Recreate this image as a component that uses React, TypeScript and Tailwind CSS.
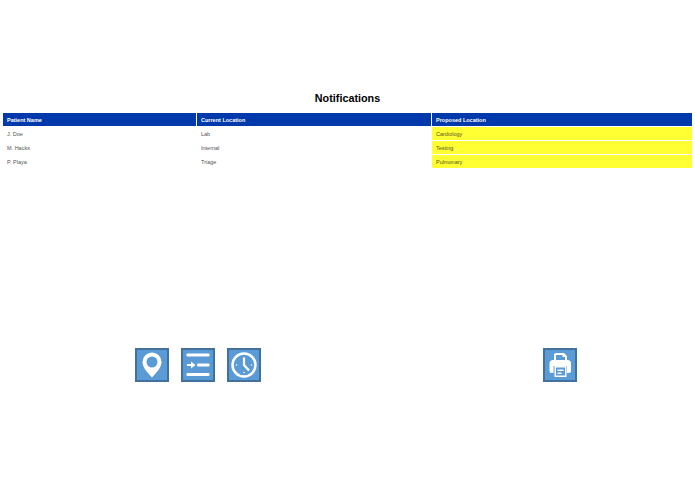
import React from 'react';

const rows = [
  { name: 'J. Doe', current: 'Lab', proposed: 'Cardiology' },
  { name: 'M. Hacks', current: 'Internal', proposed: 'Testing' },
  { name: 'P. Playa', current: 'Triage', proposed: 'Pulmonary' },
];

const IconBox: React.FC<{ children: React.ReactNode; className?: string }> = ({ children, className }) => (
  <button className={`w-[34px] h-[34px] bg-[#5b9bd5] border-2 border-[#41719c] flex items-center justify-center ${className ?? ''}`}>
    <svg width="30" height="30" viewBox="0 0 30 30">{children}</svg>
  </button>
);

export default function App() {
  return (
    <div className="w-[695px] h-[494px] bg-white font-['Liberation_Sans',Arial,sans-serif] overflow-hidden pt-[91px]">
      <h1 className="text-center text-[10.8px] leading-[14px] font-bold text-black h-[14px]">Notifications</h1>

      <div className="mt-[8px] mx-[3px] grid grid-cols-[193px_234px_260px] gap-px text-[5.5px] leading-[15px]">
        <div className="bg-[#0039ac] text-white font-bold pl-1 h-[13px]">Patient Name</div>
        <div className="bg-[#0039ac] text-white font-bold pl-1 h-[13px]">Current Location</div>
        <div className="bg-[#0039ac] text-white font-bold pl-1 h-[13px]">Proposed Location</div>
        {rows.map((row) => (
          <React.Fragment key={row.name}>
            <div className="text-[#555555] pl-1 h-[13px]">{row.name}</div>
            <div className="text-[#555555] pl-1 h-[13px]">{row.current}</div>
            <div className="bg-[#ffff33] text-[#555522] pl-1 h-[13px]">{row.proposed}</div>
          </React.Fragment>
        ))}
      </div>

      <div className="mt-[180px] pl-[135px] flex gap-[12px]">
        <IconBox>
          <path
            fillRule="evenodd"
            fill="white"
            d="M15 2.500a9.500 9.500 0 0 0-9.500 9.500c0 5 4 9.500 9.500 15.500 5.500-6 9.500-10.500 9.500-15.500A9.500 9.500 0 0 0 15 2.500zm0 4a5.500 5.500 0 1 1 0 11 5.500 5.500 0 0 1 0-11z"
          />
        </IconBox>
        <IconBox>
          <g fill="white">
            <rect x="3.500" y="3.500" width="23" height="3" rx="1" />
            <rect x="14" y="13.500" width="12.500" height="3" rx="1" />
            <rect x="3.500" y="23" width="23" height="3" rx="1" />
            <path d="M4 14h4v-2.500l4.500 3.500-4.500 3.500V16H4z" />
          </g>
        </IconBox>
        <IconBox>
          <circle cx="15" cy="15" r="11.500" fill="none" stroke="white" strokeWidth="2.500" />
          <path d="M15 7.500V15l5 5.500" fill="none" stroke="white" strokeWidth="2.200" />
          <g fill="white">
            <circle cx="7.500" cy="15" r="0.800" />
            <circle cx="22.500" cy="15" r="0.800" />
            <circle cx="15" cy="22.500" r="0.800" />
          </g>
        </IconBox>
        <IconBox className="ml-[270px]">
          <path
            fillRule="evenodd"
            fill="white"
            d="M9 10V5a2 2 0 0 1 2-2h8l3 3v4h-2V7h-2.500V5H11v5z"
          />
          <path fill="white" d="M7.500 10h15a3.500 3.500 0 0 1 3.500 3.500V21a2 2 0 0 1-2 2h-2v-7H8.500v7H6.500a2 2 0 0 1-2-2v-7.500A3.500 3.500 0 0 1 7.500 10z" />
          <path fillRule="evenodd" fill="white" d="M9.500 16h12v11h-12zM11 17.500v8h9v-8z" />
          <rect x="12.500" y="19.500" width="6" height="1.500" fill="white" />
          <rect x="12.500" y="22.500" width="4" height="1.500" fill="white" />
        </IconBox>
      </div>
    </div>
  );
}
